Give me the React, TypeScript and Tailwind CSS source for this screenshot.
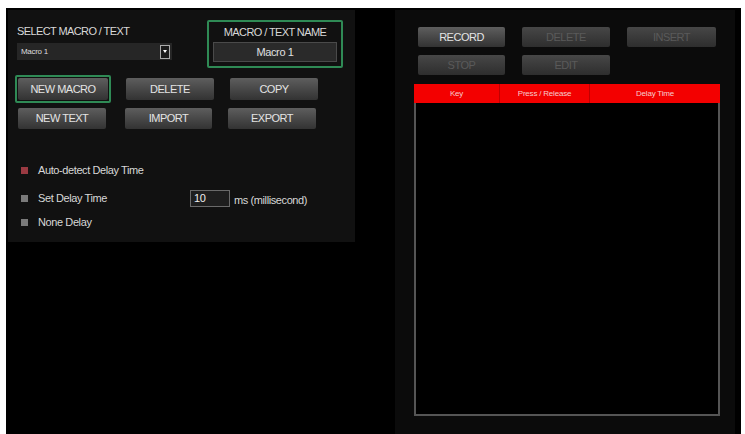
import React from "react";

const font = { fontFamily: '"Liberation Sans", Arial, sans-serif' };

function Btn({
  label,
  disabled,
  className = "",
}: {
  label: string;
  disabled?: boolean;
  className?: string;
}) {
  return (
    <div
      className={`flex items-center justify-center rounded-[2px] text-[11px] tracking-[-0.5px] ${
        disabled
          ? "bg-gradient-to-b from-[#474747] to-[#2e2e2e] text-[#5a5a5a]"
          : "bg-gradient-to-b from-[#5e5e5e] to-[#333] text-[#e4e4e4]"
      } ${className}`}
    >
      {label}
    </div>
  );
}

function Check({ red }: { red?: boolean }) {
  return (
    <div
      className={`w-[7px] h-[7px] ${red ? "bg-[#9a3a42]" : "bg-[#7a7a7a]"}`}
    />
  );
}

export default function App() {
  return (
    <div className="w-[745px] h-[434px] bg-white pt-[8px] pl-[6px] pr-[4px] overflow-hidden" style={font}>
      <div className="w-full h-[426px] bg-black flex">
        {/* Left side */}
        <div className="w-[389px] shrink-0 pt-[2px] pl-[2px]">
          <div className="w-[347px] h-[232px] bg-[#111] flex flex-col">
            {/* Top row */}
            <div className="flex pt-[10px]">
              <div className="ml-[9px] w-[155px] pt-[5px]">
                <div className="text-[11px] leading-[12px] tracking-[-0.6px] text-[#d8d8d8]">
                  SELECT MACRO / TEXT
                </div>
                <div className="mt-[6px] h-[17px] flex items-center bg-[#262626] pl-[4px] pr-[2px]">
                  <span className="text-[8px] text-[#ddd] tracking-[-0.3px]">Macro 1</span>
                  <div className="ml-auto w-[10px] h-[14px] border border-[#aaa] bg-[#1a1a1a] flex items-center justify-center">
                    <div className="w-0 h-0 border-l-[2px] border-r-[2px] border-t-[3px] border-l-transparent border-r-transparent border-t-white" />
                  </div>
                </div>
              </div>
              <div className="ml-[35px] w-[136px] h-[48px] border-2 border-[#2f8a55] rounded-[2px] flex flex-col items-center">
                <div className="mt-[4px] text-[11px] leading-[12px] tracking-[-0.6px] text-[#d8d8d8]">
                  MACRO / TEXT NAME
                </div>
                <div className="mt-[4px] w-[124px] h-[20px] bg-[#2a2a2a] border border-[#4a4a4a] flex items-center justify-center text-[11px] tracking-[-0.4px] text-[#e0e0e0]">
                  Macro 1
                </div>
              </div>
            </div>

            {/* Buttons */}
            <div className="flex mt-[7px] ml-[7px] items-center">
              <div className="p-[1px] border-2 border-[#2f8a55] rounded-[2px]">
                <Btn label="NEW MACRO" className="w-[90px] h-[22px]" />
              </div>
              <Btn label="DELETE" className="ml-[15px] w-[88px] h-[22px]" />
              <Btn label="COPY" className="ml-[16px] w-[88px] h-[22px]" />
            </div>
            <div className="flex mt-[5px] ml-[10px]">
              <Btn label="NEW TEXT" className="w-[88px] h-[21px]" />
              <Btn label="IMPORT" className="ml-[19px] w-[87px] h-[21px]" />
              <Btn label="EXPORT" className="ml-[16px] w-[88px] h-[21px]" />
            </div>

            {/* Delay options */}
            <div className="mt-[34px] ml-[13px] flex flex-col text-[11px] tracking-[-0.4px] text-[#d8d8d8]">
              <div className="flex items-center h-[14px]">
                <Check red />
                <span className="ml-[10px]">Auto-detect Delay Time</span>
              </div>
              <div className="flex items-center h-[18px] mt-[12px]">
                <Check />
                <span className="ml-[10px] w-[150px]">Set Delay Time</span>
                <div className="ml-[2px] w-[40px] h-[17px] bg-[#1e1e1e] border border-[#6a6a6a] pl-[3px] text-[11px] leading-[15px] text-[#eee]">
                  10
                </div>
                <span className="ml-[4px] mt-[4px]">ms (millisecond)</span>
              </div>
              <div className="flex items-center h-[14px] mt-[8px]">
                <Check />
                <span className="ml-[10px]">None Delay</span>
              </div>
            </div>
          </div>
        </div>

        {/* Right side */}
        <div className="w-[340px] shrink-0 mt-[2px] bg-[#0b0b0b] flex flex-col">
          <div className="flex mt-[17px] ml-[23px] gap-[17px]">
            <Btn label="RECORD" className="w-[87px] h-[20px]" />
            <Btn label="DELETE" disabled className="w-[88px] h-[20px]" />
            <Btn label="INSERT" disabled className="w-[89px] h-[20px]" />
          </div>
          <div className="flex mt-[8px] ml-[23px] gap-[17px]">
            <Btn label="STOP" disabled className="w-[87px] h-[20px]" />
            <Btn label="EDIT" disabled className="w-[88px] h-[20px]" />
          </div>
          <div className="mt-[9px] ml-[19px] w-[306px] flex flex-col">
            <div className="h-[19px] bg-[#f30000] flex text-[8px] text-[#f6cccc] tracking-[-0.2px]">
              <div className="w-[86px] flex items-center justify-center border-r border-[#c00000]">Key</div>
              <div className="w-[90px] flex items-center justify-center border-r border-[#c00000]">Press / Release</div>
              <div className="flex-1 flex items-center justify-center">Delay Time</div>
            </div>
            <div className="h-[313px] bg-black border-2 border-t-0 border-[#555]" />
          </div>
        </div>
      </div>
    </div>
  );
}
